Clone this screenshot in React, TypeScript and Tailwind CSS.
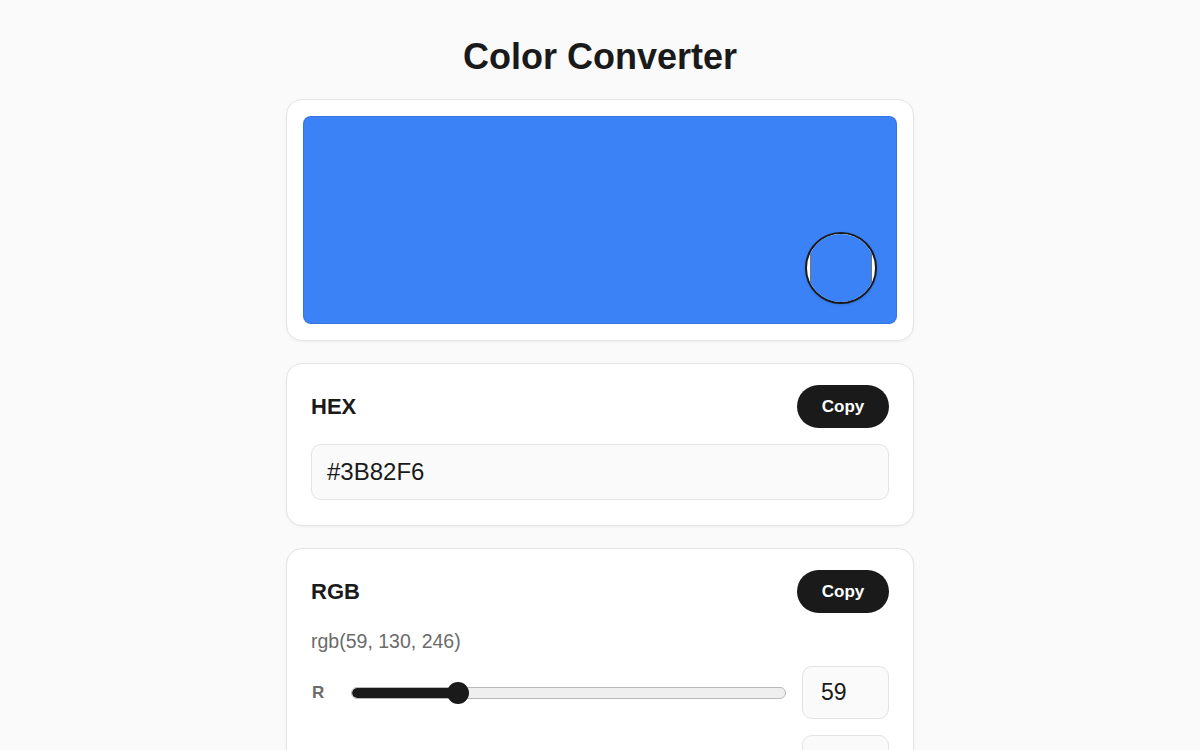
import React from "react";

const HEX = "#3B82F6";
const RGB = { r: 59, g: 130, b: 246 };

function CopyButton() {
  return (
    <button className="h-[43px] w-[92px] rounded-full bg-[#1a1a1a] text-[17px] font-bold text-white leading-none">
      Copy
    </button>
  );
}

function CardHeader({ title }: { title: string }) {
  return (
    <div className="flex items-center justify-between">
      <h2 className="text-[22px] font-bold leading-none text-[#1a1a1a]">{title}</h2>
      <CopyButton />
    </div>
  );
}

function Slider({ value }: { value: number }) {
  const pct = value / 255;
  return (
    <div className="relative flex h-[22px] flex-1 items-center">
      <div className="relative h-[12px] w-full overflow-hidden rounded-full border border-[#b9b9b9] bg-[#efefef]">
        <div
          className="absolute inset-y-0 left-0 rounded-full bg-[#1a1a1a]"
          style={{ width: `calc(${pct} * (100% - 20px) + 10px)` }}
        />
      </div>
      <div
        className="absolute top-0 h-[22px] w-[22px] rounded-full bg-[#1a1a1a]"
        style={{ left: `calc(${pct} * (100% - 22px))` }}
      />
    </div>
  );
}

function ChannelRow({ label, value }: { label: string; value: number }) {
  return (
    <div className="flex items-center gap-4">
      <span className="w-[24px] pl-px text-[17px] font-bold text-[#6b6b6b]">{label}</span>
      <Slider value={value} />
      <div className="flex h-[53px] w-[87px] items-center rounded-[10px] border border-[#e3e3e3] bg-[#fafafa] pl-[18px] text-[23px] text-[#1a1a1a]">
        {value}
      </div>
    </div>
  );
}

export default function App() {
  return (
    <div className="min-h-screen bg-[#fafafa] pb-10 pt-[35px] font-['Liberation_Sans',Arial,sans-serif] text-[#1a1a1a]">
      <h1 className="mb-[21px] text-center text-[36px] font-bold leading-[43px]">Color Converter</h1>

      <div className="mx-auto flex w-[628px] flex-col gap-[22px]">
        {/* preview swatch with the picker knob */}
        <section className="rounded-2xl border border-[#e5e5e5] bg-white p-4 shadow-[0_1px_3px_rgba(0,0,0,0.05)]">
          <div className="relative h-[208px] rounded-lg border border-black/10 bg-[#3B82F6]">
            <div className="absolute bottom-[19px] right-[19px] flex h-[72px] w-[72px] overflow-hidden rounded-full border-2 border-[#1a1a1a] bg-white px-[3px] shadow-sm">
              <div className="h-full w-full border-x border-[#777] bg-[#3B82F6]" />
            </div>
          </div>
        </section>

        {/* HEX */}
        <section className="rounded-2xl border border-[#e5e5e5] bg-white px-6 pb-[25px] pt-[21px] shadow-[0_1px_3px_rgba(0,0,0,0.05)]">
          <CardHeader title="HEX" />
          <div className="mt-4 flex h-[56px] items-center rounded-[10px] border border-[#e3e3e3] bg-[#fafafa] pl-[15px] text-[24px]">
            {HEX}
          </div>
        </section>

        {/* RGB */}
        <section className="rounded-2xl border border-[#e5e5e5] bg-white px-6 pb-6 pt-[21px] shadow-[0_1px_3px_rgba(0,0,0,0.05)]">
          <CardHeader title="RGB" />
          <p className="mb-[11px] mt-[14px] text-[19.5px] leading-[28px] text-[#6b6b6b]">
            rgb({RGB.r}, {RGB.g}, {RGB.b})
          </p>
          <div className="flex flex-col gap-4">
            <ChannelRow label="R" value={RGB.r} />
            <ChannelRow label="G" value={RGB.g} />
            <ChannelRow label="B" value={RGB.b} />
          </div>
        </section>

        {/* HSL */}
        <section className="rounded-2xl border border-[#e5e5e5] bg-white px-6 pb-6 pt-[21px] shadow-[0_1px_3px_rgba(0,0,0,0.05)]">
          <CardHeader title="HSL" />
          <p className="mt-[14px] text-[20px] leading-[28px] text-[#6b6b6b]">hsl(217, 91%, 60%)</p>
        </section>
      </div>
    </div>
  );
}
